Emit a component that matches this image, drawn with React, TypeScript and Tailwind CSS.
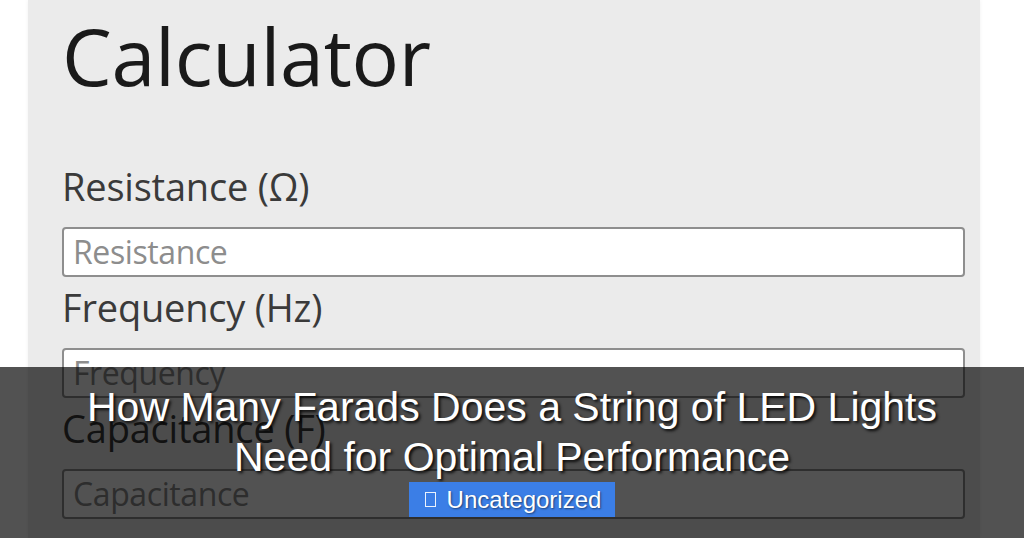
import React from 'react';

const fields = [
  { label: 'Resistance (Ω)', placeholder: 'Resistance' },
  { label: 'Frequency (Hz)', placeholder: 'Frequency' },
  { label: 'Capacitance (F)', placeholder: 'Capacitance' },
];

export default function App() {
  return (
    <div className="relative w-[1024px] h-[538px] overflow-hidden bg-white">
      {/* calculator panel */}
      <div
        className="ml-[28px] w-[952px] h-full bg-[#ebebeb] pl-[34px] pr-[15px] pt-[16px] shadow-[0_0_4px_rgba(0,0,0,0.06)]"
        style={{ fontFamily: '"Open Sans", "Noto Sans", sans-serif' }}
      >
        <h1 className="text-[79px] leading-[80px] text-[#1a1a1a] tracking-[-0.3px]">Calculator</h1>
        <div className="mt-[66px] flex flex-col">
          {fields.map((f, i) => (
            <div key={f.label} className={i > 0 ? 'mt-[6px]' : ''}>
              <div className="text-[38px] leading-[48px] text-[#3a3a3a] tracking-[-0.2px]">{f.label}</div>
              <div className="mt-[17px] h-[50px] w-[903px] rounded-[4px] border-2 border-[#8e8e8e] bg-white flex items-center pl-[9px]">
                <span className="text-[32px] text-[#8d8d8d] tracking-[-0.4px]">{f.placeholder}</span>
              </div>
            </div>
          ))}
        </div>
      </div>

      {/* title overlay */}
      <div
        className="absolute left-0 right-0 top-[367px] bottom-0 bg-black/[0.68] flex flex-col items-center pt-[15px]"
        style={{ fontFamily: '"Liberation Sans", Arial, sans-serif' }}
      >
        <h2 className="text-[41px] leading-[50px] text-white text-center [text-shadow:2px_2px_3px_rgba(0,0,0,0.85)]">
          How Many Farads Does a String of LED Lights
          <br />
          Need for Optimal Performance
        </h2>
        <div className="h-[35px] bg-[#3b7ee6] flex items-center pl-[16px] pr-[14px] gap-[11px]">
          <span className="w-[11px] h-[15px] border-[1.5px] border-white/90" />
          <span className="text-[24px] leading-none text-white [text-shadow:1px_1px_2px_rgba(0,0,0,0.5)]">Uncategorized</span>
        </div>
      </div>
    </div>
  );
}
